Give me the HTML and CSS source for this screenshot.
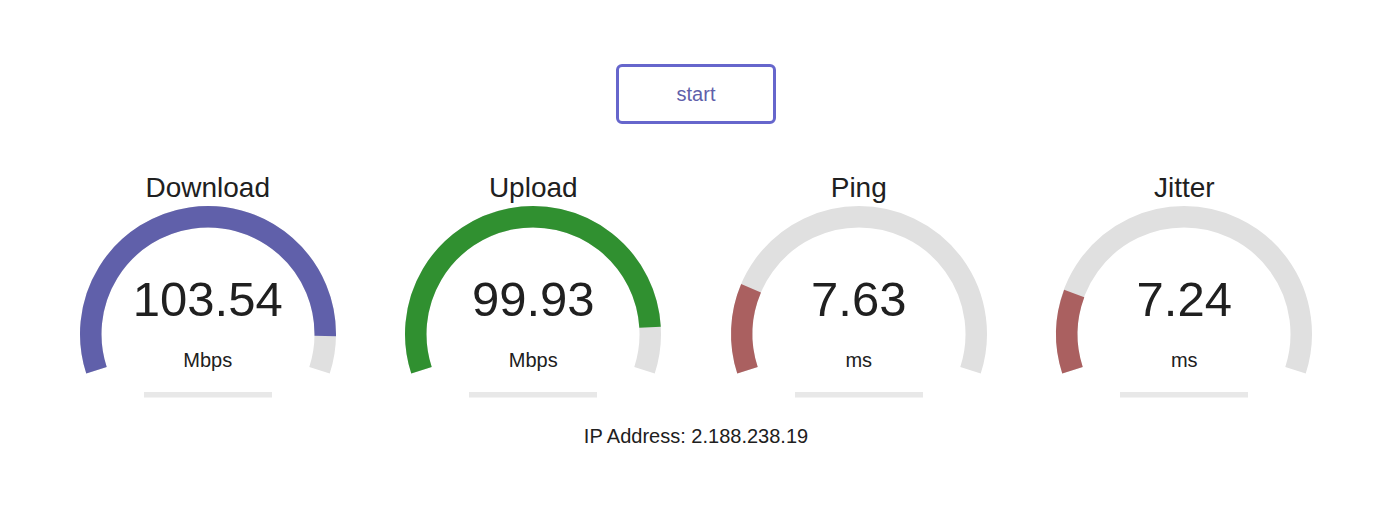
FILE: index.html
```html
<!DOCTYPE html>
<html lang="en">
<head>
    <meta charset="UTF-8">
    <meta name="viewport" content="width=device-width, initial-scale=1.0">
    <title>Speed Test</title>
    <link rel="stylesheet" href="styles.css">
</head>
<body>

    <div class="page">
        <div class="start-btn">start</div>

        <div class="tests">
            <!-- Download -->
            <div class="test-area">
                <svg class="meter" width="320" height="235" viewBox="0 0 320 235">
                    <path class="meter-bk" d="M 48.49 203.23 A 117.25 117.25 0 1 1 271.51 203.23"/>
                    <path class="meter-dl" d="M 48.49 203.23 A 117.25 117.25 0 1 1 277.23 169.05"/>
                    <rect class="meter-prog" x="96" y="225" width="128" height="5.5"/>
                </svg>
                <div class="meter-info">
                    <div class="test-name">Download</div>
                    <div class="meter-text">103.54</div>
                    <div class="unit">Mbps</div>
                </div>
            </div>

            <!-- Upload -->
            <div class="test-area">
                <svg class="meter" width="320" height="235" viewBox="0 0 320 235">
                    <path class="meter-bk" d="M 48.49 203.23 A 117.25 117.25 0 1 1 271.51 203.23"/>
                    <path class="meter-ul" d="M 48.49 203.23 A 117.25 117.25 0 1 1 277.06 160.25"/>
                    <rect class="meter-prog" x="96" y="225" width="128" height="5.5"/>
                </svg>
                <div class="meter-info">
                    <div class="test-name">Upload</div>
                    <div class="meter-text">99.93</div>
                    <div class="unit">Mbps</div>
                </div>
            </div>

            <!-- Ping -->
            <div class="test-area">
                <svg class="meter" width="320" height="235" viewBox="0 0 320 235">
                    <path class="meter-bk" d="M 48.49 203.23 A 117.25 117.25 0 1 1 271.51 203.23"/>
                    <path class="meter-ping" d="M 48.49 203.23 A 117.25 117.25 0 0 1 52.07 121.19"/>
                    <rect class="meter-prog" x="96" y="225" width="128" height="5.5"/>
                </svg>
                <div class="meter-info">
                    <div class="test-name">Ping</div>
                    <div class="meter-text">7.63</div>
                    <div class="unit">ms</div>
                </div>
            </div>

            <!-- Jitter -->
            <div class="test-area">
                <svg class="meter" width="320" height="235" viewBox="0 0 320 235">
                    <path class="meter-bk" d="M 48.49 203.23 A 117.25 117.25 0 1 1 271.51 203.23"/>
                    <path class="meter-ping" d="M 48.49 203.23 A 117.25 117.25 0 0 1 50.20 126.5"/>
                    <rect class="meter-prog" x="96" y="225" width="128" height="5.5"/>
                </svg>
                <div class="meter-info">
                    <div class="test-name">Jitter</div>
                    <div class="meter-text">7.24</div>
                    <div class="unit">ms</div>
                </div>
            </div>
        </div>

        <div class="ip-area">IP Address: <span id="ip">2.188.238.19</span></div>
    </div>

</body>
</html>
```

FILE: styles.css
```css
/* Global Styles */
html, body {
    margin: 0;
    padding: 0;
    background: #ffffff;
}

body {
    font-family: "Liberation Sans", Arial, sans-serif;
    font-size: 20px;
    color: #202020;
    text-align: center;
}

.page {
    width: 1392px;
}

/* Start button */
.start-btn {
    display: block;
    width: 160px;
    height: 60px;
    margin: 64px auto 0;
    box-sizing: border-box;
    border: 3px solid #6666cc;
    border-radius: 6px;
    color: #6060aa;
    line-height: 54px;
    cursor: pointer;
}

/* Gauges */
.tests {
    display: flex;
    justify-content: center;
    gap: 5.5px;
    margin-top: 43px;
}

.test-area {
    display: grid;
    width: 320px;
    height: 235px;
}

.test-area > * {
    grid-area: 1 / 1;
}

.meter path {
    fill: none;
    stroke-width: 21.5;
    stroke-linecap: butt;
}

.meter .meter-bk { stroke: #e0e0e0; }
.meter .meter-dl { stroke: #6060aa; }
.meter .meter-ul { stroke: #309030; }
.meter .meter-ping { stroke: #aa6060; }
.meter .meter-prog { fill: #e8e8e8; }

.meter-info {
    display: flex;
    flex-direction: column;
    align-items: center;
    line-height: 1;
}

.test-name {
    font-size: 28px;
    margin-top: 6.5px;
}

.meter-text {
    font-size: 49px;
    margin-top: 73.5px;
}

.unit {
    font-size: 20px;
    margin-top: 26px;
}

/* IP */
.ip-area {
    margin-top: 24px;
    line-height: 1;
}
```
